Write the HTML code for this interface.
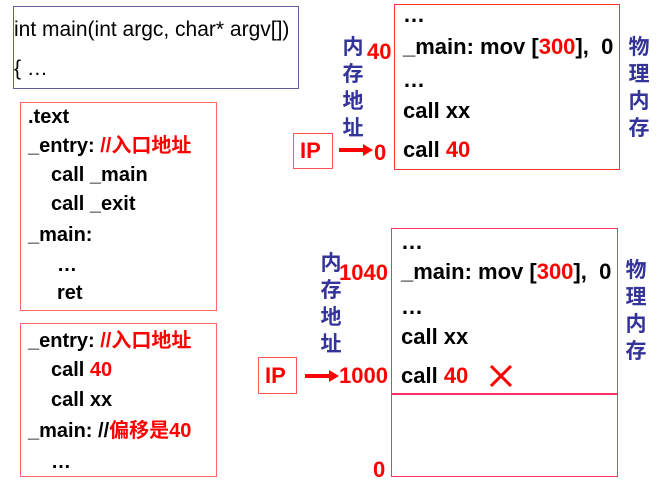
<!DOCTYPE html>
<html><head><meta charset="utf-8"><style>
body{margin:0;width:663px;height:482px;background:#fff;position:relative;overflow:hidden;font-family:"Liberation Sans","Noto Sans CJK SC",sans-serif;}
.a{position:absolute;white-space:nowrap;}
.b{font-weight:bold;font-size:20px;line-height:24px;color:#000;}
.c{font-size:22px;}
.r{color:#f00;}
.box{position:absolute;box-sizing:border-box;}
.v{position:absolute;font-weight:bold;font-size:21px;line-height:27px;color:#333399;width:24px;text-align:center;font-family:"Noto Sans CJK SC",sans-serif;}
</style></head><body>
<div class="box" style="left:13px;top:6px;width:286px;height:83px;border:1.5px solid #5f5f9f;"></div>
<div class="a" style="left:14px;top:18px;font-size:21px;line-height:24px;">int main(int argc, char* argv[])</div>
<div class="a" style="left:14px;top:57px;font-size:21px;line-height:24px;">{ …</div>

<div class="box" style="left:20px;top:102px;width:197px;height:209px;border:1.5px solid #f66;"></div>
<div class="a b" style="left:28px;top:105px;">.text</div>
<div class="a b" style="left:28px;top:134px;">_entry: <span class="r">//入口地址</span></div>
<div class="a b" style="left:51px;top:163px;">call _main</div>
<div class="a b" style="left:51px;top:192px;">call _exit</div>
<div class="a b" style="left:28px;top:223px;">_main:</div>
<div class="a b" style="left:57px;top:253px;">…</div>
<div class="a b" style="left:57px;top:281px;">ret</div>

<div class="box" style="left:20px;top:323px;width:197px;height:154px;border:1.5px solid #f66;"></div>
<div class="a b" style="left:28px;top:329px;">_entry: <span class="r">//入口地址</span></div>
<div class="a b" style="left:51px;top:358px;">call <span class="r">40</span></div>
<div class="a b" style="left:51px;top:388px;">call xx</div>
<div class="a b" style="left:28px;top:419px;">_main: //<span class="r">偏移是40</span></div>
<div class="a b" style="left:51px;top:450px;">…</div>

<!-- top right -->
<div class="box" style="left:293px;top:133px;width:40px;height:36px;border:1.5px solid #f55;"></div>
<div class="a b r c" style="left:300px;top:139px;">IP</div>
<div class="a" style="left:339px;top:148px;width:26px;height:4px;background:#f00;"></div>
<div class="a" style="left:363px;top:144px;width:0;height:0;border-left:10px solid #f00;border-top:6px solid transparent;border-bottom:6px solid transparent;"></div>
<div class="a b r c" style="left:374px;top:141px;">0</div>
<div class="a b r c" style="left:367px;top:40px;">40</div>
<div class="v" style="left:341px;top:33px;">内<br>存<br>地<br>址</div>
<div class="box" style="left:394px;top:4px;width:226px;height:166px;border:1.5px solid #f33;"></div>
<div class="a b c" style="left:403px;top:3px;">…</div>
<div class="a b c" style="left:403px;top:35px;">_main: mov [<span class="r">300</span>],&nbsp; 0</div>
<div class="a b c" style="left:403px;top:68px;">…</div>
<div class="a b c" style="left:403px;top:99px;">call xx</div>
<div class="a b c" style="left:403px;top:138px;">call <span class="r">40</span></div>
<div class="v" style="left:627px;top:33px;">物<br>理<br>内<br>存</div>

<!-- bottom right -->
<div class="box" style="left:258px;top:357px;width:39px;height:37px;border:1.5px solid #f55;"></div>
<div class="a b r c" style="left:265px;top:364px;">IP</div>
<div class="a" style="left:305px;top:374px;width:26px;height:4px;background:#f00;"></div>
<div class="a" style="left:329px;top:370px;width:0;height:0;border-left:10px solid #f00;border-top:6px solid transparent;border-bottom:6px solid transparent;"></div>
<div class="a b r c" style="left:339px;top:364px;">1000</div>
<div class="a b r c" style="left:339px;top:261px;">1040</div>
<div class="a b r c" style="left:373px;top:458px;">0</div>
<div class="v" style="left:319px;top:249px;">内<br>存<br>地<br>址</div>
<div class="box" style="left:391px;top:228px;width:227px;height:249px;border:1.5px solid #f36;"></div>
<div class="a" style="left:391px;top:393px;width:227px;height:1.5px;background:#f36;"></div>
<div class="a b c" style="left:401px;top:230px;">…</div>
<div class="a b c" style="left:401px;top:260px;">_main: mov [<span class="r">300</span>],&nbsp; 0</div>
<div class="a b c" style="left:401px;top:295px;">…</div>
<div class="a b c" style="left:401px;top:325px;">call xx</div>
<div class="a b c" style="left:401px;top:364px;">call <span class="r">40</span></div>
<svg class="a" style="left:488px;top:363px;" width="26" height="26"><path d="M3 3L23 23M23 3L3 23" stroke="#f00" stroke-width="3"/></svg>
<div class="v" style="left:624px;top:256px;">物<br>理<br>内<br>存</div>
</body></html>
